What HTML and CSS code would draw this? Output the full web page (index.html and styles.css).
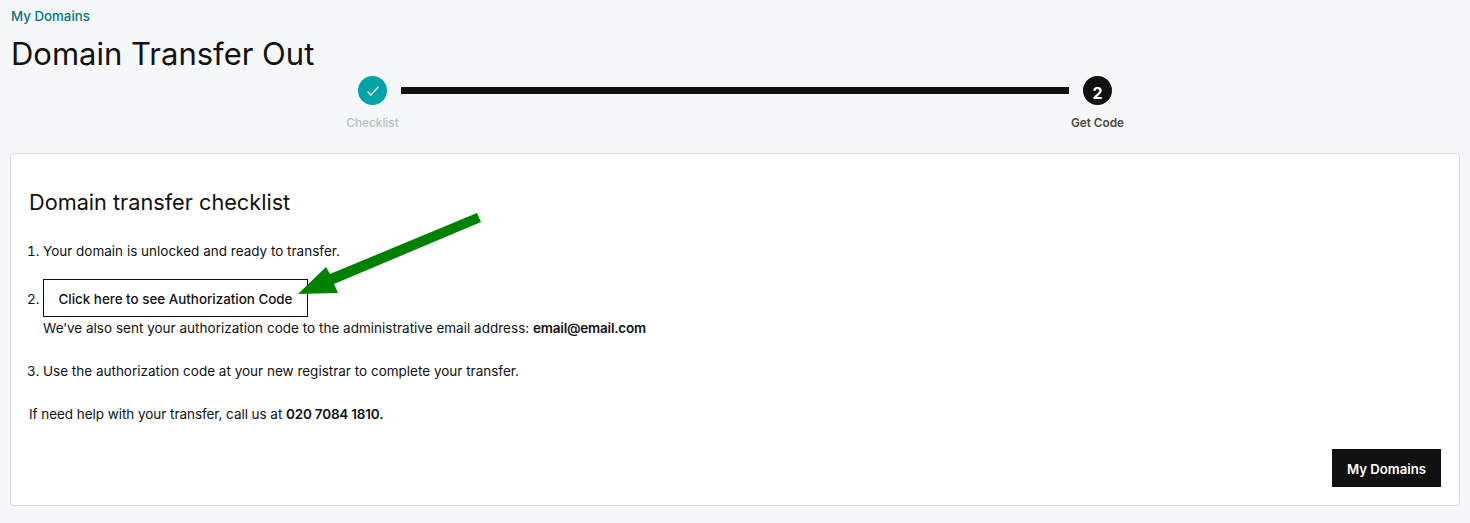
FILE: index.html
```
<!DOCTYPE html>
<html lang="en">
<head>
<meta charset="utf-8">
<title>Domain Transfer Out</title>
<link rel="stylesheet" href="styles.css">
</head>
<body>
<div class="page">
  <a class="crumb" href="#">My Domains</a>
  <h1 class="title">Domain Transfer Out</h1>
  <div class="stepper">
    <div class="step done">
      <span class="dot"><svg width="14" height="12" viewBox="0 0 14 12"><path d="M1.5 6.5 L5 10 L12.5 1.5" fill="none" stroke="#fff" stroke-width="1.2"/></svg></span>
      <span class="label">Checklist</span>
    </div>
    <div class="bar"></div>
    <div class="step current">
      <span class="dot">2</span>
      <span class="label">Get Code</span>
    </div>
  </div>
  <section class="card">
    <h2 class="card-title">Domain transfer checklist</h2>
    <ol class="list">
      <li class="item item-first">Your domain is unlocked and ready to transfer.</li>
      <li class="item item-code">
        <button class="code-btn" type="button">Click here to see Authorization Code</button>
        <div class="note">We’ve also sent your authorization code to the administrative email address: <b>email@email.com</b></div>
      </li>
      <li class="item">Use the authorization code at your new registrar to complete your transfer.</li>
    </ol>
    <p class="help">If need help with your transfer, call us at <b>020 7084 1810.</b></p>
    <div class="actions"><button class="primary" type="button">My Domains</button></div>
  </section>
</div>
<svg class="arrow" width="1470" height="523" viewBox="0 0 1470 523"><polygon points="298,294 326,267 330,274 477,213 481,222 334,284 338,293" fill="#008000"/></svg>
</body>
</html>
```
FILE: styles.css
```
* { box-sizing: border-box; }
html, body { margin: 0; height: 523px; overflow: hidden; }
body { background: #f5f7f8; color: #111; font-family: Inter, "Liberation Sans", sans-serif; font-size: 13.5px; position: relative; }
.page { padding: 8px 10px 0; }
.crumb { display: block; color: #09757a; font-size: 13.3px; font-weight: 500; line-height: 16px; margin-left: 1px; text-decoration: none; }
.title { margin: 10px 0 0 1px; font-size: 31px; font-weight: 400; line-height: 40px; }
.stepper { display: flex; align-items: flex-start; margin: 2px 0 0 336px; width: 789px; height: 77px; }
.step { display: flex; flex-direction: column; align-items: center; width: 53px; flex: none; }
.dot { width: 29px; height: 29px; border-radius: 50%; display: flex; align-items: center; justify-content: center; color: #fff; font-weight: 700; font-size: 16px; padding-top: 4px; }
.done .dot { background: #00a4a6; padding-top: 0; }
.current .dot { background: #111; }
.label { margin-top: 10px; font-size: 11.8px; line-height: 16px; font-weight: 500; white-space: nowrap; }
.done .label { color: #b6bfc6; }
.current .label { color: #4f4640; font-weight: 600; }
.bar { width: 668px; height: 7px; background: #111; margin: 11px 0 0 2px; flex: none; }
.current { margin-left: 2px; }
.card { width: 1450px; height: 353px; background: #fff; border: 1px solid #d6dadd; border-radius: 4px; padding: 34px 18px 0; }
.card-title { margin: 0; font-size: 21.7px; font-weight: 400; line-height: 28px; }
.list { margin: 25px 0 0; padding: 0 0 0 14px; }
.item { line-height: 20px; margin-bottom: 23px; }
.item-first { margin-bottom: 18px; }
.code-btn { display: block; width: 265px; height: 38px; background: #fff; border: 1px solid #111; color: #111; font: 500 13.4px Inter, "Liberation Sans", sans-serif; padding: 2px 0 0; }
.note { margin-top: 1px; letter-spacing: 0.015px; }
.note b, .help b { font-weight: 600; letter-spacing: -0.2px; }
.help { margin: 0; line-height: 20px; letter-spacing: -0.05px; }
.actions { display: flex; justify-content: flex-end; margin-top: 25px; }
.primary { width: 109px; height: 38px; background: #111; color: #fff; border: 0; font: 600 13.2px Inter, "Liberation Sans", sans-serif; padding: 2px 0 0; }
.arrow { position: absolute; left: 0; top: 0; pointer-events: none; }
```
